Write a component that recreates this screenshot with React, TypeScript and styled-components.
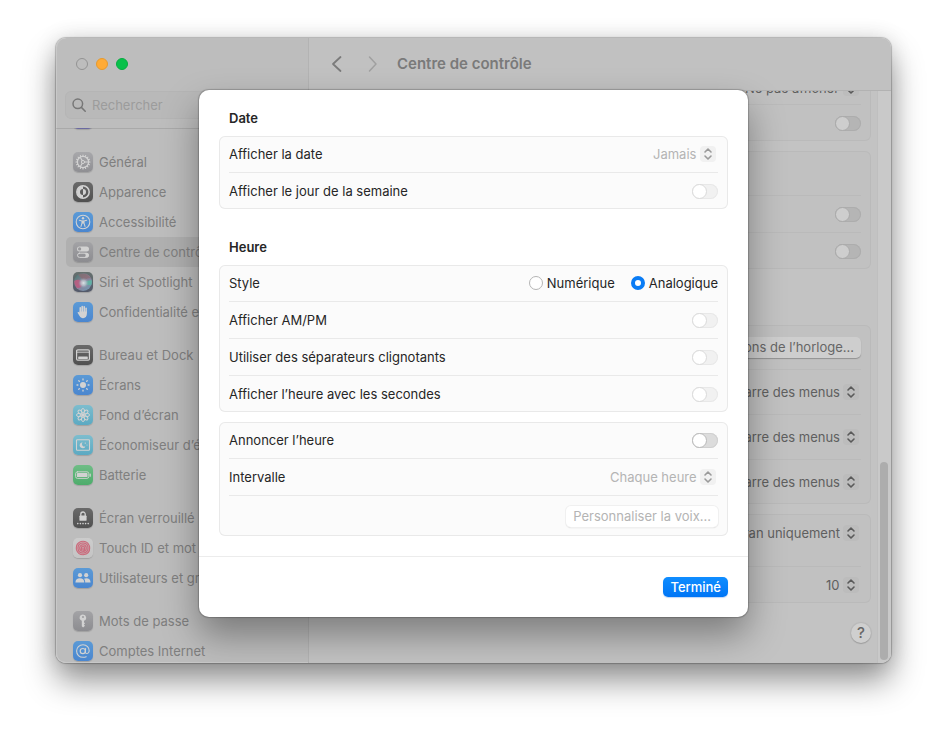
import React from "react";
import styled, { createGlobalStyle, css } from "styled-components";

const GlobalStyle = createGlobalStyle`
  *, *::before, *::after { box-sizing: border-box; }
  body {
    margin: 0;
    background: #fff;
    font-family: Inter, "Liberation Sans", sans-serif;
    font-size: 13px;
    line-height: 16px;
    color: #262626;
  }
  button, input, select { font: inherit; color: inherit; margin: 0; }
  h1, h2 { margin: 0; }
`;

/* ---------- window ---------- */

const Desktop = styled.div`
  display: flex;
  height: 100vh;
  min-height: 640px;
  padding: 38px 56px 74px;
`;

const Window = styled.div`
  position: relative;
  flex: 1;
  min-width: 0;
  display: grid;
  grid-template-columns: 253px minmax(0, 1fr);
  border-radius: 10px;
  box-shadow: 0 0 1px 1px rgba(0, 0, 0, 0.22), 0 18px 32px rgba(0, 0, 0, 0.42),
    0 0 22px rgba(0, 0, 0, 0.12);
`;

const Sidebar = styled.nav`
  display: flex;
  flex-direction: column;
  min-height: 0;
  overflow: hidden;
  background: #bdbdbd;
  border-right: 1px solid #b3b3b3;
  border-radius: 10px 0 0 10px;
  box-shadow: inset 1px 0 0 #c8c8c8, inset 0 -1px 0 #c8c8c8;
`;

const SidebarHeader = styled.header`
  position: relative;
  z-index: 1;
  flex: none;
  display: flex;
  flex-direction: column;
  gap: 21px;
  padding: 20px 9px 9px;
  box-shadow: 0 1px 0 rgba(0, 0, 0, 0.1);
`;

const Lights = styled.div`
  display: flex;
  gap: 8px;
  padding-left: 11px;
`;

const Light = styled.button<{ $fill: string; $edge: string }>`
  width: 12px;
  height: 12px;
  padding: 0;
  border: 1px solid ${(p) => p.$edge};
  border-radius: 50%;
  background: ${(p) => p.$fill};
`;

const Search = styled.label`
  display: flex;
  align-items: center;
  gap: 6px;
  height: 28px;
  padding: 0 6px;
  border: 1px solid #b5b5b5;
  border-radius: 6px;
  background: #b9b9b9;
  color: #777;

  svg { flex: none; }
  input {
    flex: 1;
    min-width: 0;
    padding: 0;
    border: 0;
    outline: 0;
    background: none;
  }
  input::placeholder { color: #9c9c9c; opacity: 1; }
`;

const List = styled.div`
  flex: 1;
  min-height: 0;
  overflow: hidden;
`;

const Groups = styled.div`
  display: flex;
  flex-direction: column;
  gap: 13px;
  margin: -24px 10px 0;
`;

const Group = styled.ul`
  list-style: none;
  margin: 0;
  padding: 0;
`;

const Item = styled.a<{ $selected?: boolean }>`
  display: flex;
  align-items: center;
  gap: 6px;
  height: 30px;
  padding-left: 7px;
  border-radius: 5px;
  color: #7f7f7f;
  text-decoration: none;
  white-space: nowrap;
  overflow: hidden;
  background: ${(p) => (p.$selected ? "#b0b0b0" : "none")};

  svg { flex: none; }
`;

const Tile = styled.span<{ $top: string; $bottom: string }>`
  flex: none;
  display: block;
  width: 20px;
  height: 20px;
  border-radius: 5px;
  background: linear-gradient(${(p) => p.$top}, ${(p) => p.$bottom});
  box-shadow: 0 1px 1px rgba(0, 0, 0, 0.15);
  color: #d2d2d2;

  svg { display: block; }
`;

/* ---------- main pane ---------- */

const Main = styled.main`
  display: flex;
  flex-direction: column;
  min-width: 0;
  min-height: 0;
  overflow: hidden;
  background: #c3c3c3;
  border-radius: 0 10px 10px 0;
`;

const Toolbar = styled.header`
  flex: none;
  display: flex;
  align-items: center;
  height: 53px;
  padding-left: 20px;
  gap: 16px;
  background: #c1c1c1;
  border-bottom: 1px solid #b2b2b2;
`;

const NavButtons = styled.div`
  display: flex;
  gap: 20px;
`;

const NavButton = styled.button<{ $dim?: boolean }>`
  display: flex;
  width: 16px;
  height: 20px;
  padding: 0;
  border: 0;
  background: none;
  color: ${(p) => (p.$dim ? "#a0a0a0" : "#7b7b7b")};
`;

const Title = styled.h1`
  font-size: 15px;
  line-height: 20px;
  font-weight: 600;
  color: #7a7a7a;
`;

const Scroller = styled.div`
  flex: 1;
  min-height: 0;
  display: grid;
  grid-template-columns: minmax(0, 1fr) 14px;
`;

const Pane = styled.div`
  overflow: hidden;
  padding: 0 6px 0 20px;
`;

const PaneContent = styled.div`
  display: flex;
  flex-direction: column;
  gap: 10px;
  margin-top: -19px;
`;

const Gutter = styled.div`
  display: flex;
  flex-direction: column;
  justify-content: flex-end;
  align-items: center;
  padding: 3px 3px 3px 2px;
  background: #c9c9c9;
  border-left: 1px solid #bfbfbf;
`;

const Thumb = styled.div`
  width: 8px;
  height: 35%;
  border-radius: 4px;
  background: #adadad;
`;

const PaneCard = styled.section<{ $spaced?: boolean }>`
  padding: 0 10px;
  border-radius: 6px;
  background: #c1c1c1;
  box-shadow: inset 0 0 0 1px #bababa;
  margin-top: ${(p) => (p.$spaced ? "46px" : "0")};
`;

const HelpRow = styled.div`
  display: flex;
  justify-content: flex-end;
  padding-top: 10px;
`;

const HelpButton = styled.button`
  width: 20px;
  height: 20px;
  padding: 0;
  border: 0;
  border-radius: 50%;
  background: #cfcfcf;
  box-shadow: 0 0 1px 1px rgba(0, 0, 0, 0.06), 0 1px 1px rgba(0, 0, 0, 0.15);
  font-size: 15px;
  font-weight: 500;
  color: #666;
`;

/* ---------- shared controls ---------- */

const Row = styled.div<{ $h?: number; $dark?: boolean; $top?: boolean }>`
  display: flex;
  align-items: ${(p) => (p.$top ? "flex-start" : "center")};
  justify-content: space-between;
  gap: 16px;
  height: ${(p) => p.$h ?? 36}px;
  padding-top: ${(p) => (p.$top ? "11px" : "0")};

  &:not(:first-child) {
    height: ${(p) => (p.$h ?? 36) + 1}px;
    border-top: 1px solid ${(p) => (p.$dark ? "#bababa" : "#e9e9e9")};
  }
`;

const End = styled.div`
  margin-left: auto;
  display: flex;
  align-items: center;
`;

const Switch = styled.input.attrs({ type: "checkbox", role: "switch" })<{
  $tone?: "pane" | "off" | "on";
}>`
  appearance: none;
  flex: none;
  width: 26px;
  height: 15px;
  border-radius: 8px;
  ${(p) => {
    const [track, edge, knob, ring] =
      p.$tone === "pane"
        ? ["#b5b5b5", "#adadad", "#cecece", "#aaaaaa"]
        : p.$tone === "on"
          ? ["#dcdcdc", "#d0d0d0", "#ffffff", "#b9b9b9"]
          : ["#f1f1f1", "#e8e8e8", "#ffffff", "#dadada"];
    return css`
      background: ${track};
      box-shadow: inset 0 0 0 1px ${edge};
      &::before {
        content: "";
        display: block;
        width: 15px;
        height: 15px;
        border: 1px solid ${ring};
        border-radius: 50%;
        background: ${knob};
      }
    `;
  }}
`;

const SelectBox = styled.span<{ $pane?: boolean }>`
  display: inline-grid;
  align-items: center;
  justify-items: end;
  padding-right: 2px;
  color: ${(p) => (p.$pane ? "#5f5f5f" : "#b4b4b4")};

  > * { grid-area: 1 / 1; }
  select {
    appearance: none;
    padding: 0 19px 0 0;
    border: 0;
    outline: 0;
    background: none;
    opacity: 1;
    line-height: 16px;
  }
  svg {
    pointer-events: none;
    border-radius: 4px;
    color: ${(p) => (p.$pane ? "#5a5a5a" : "#9a9a9a")};
    background: ${(p) => (p.$pane ? "#bcbcbc" : "#f1f1f1")};
  }
`;

const Select = ({ value, label, pane, disabled }: { value: string; label: string; pane?: boolean; disabled?: boolean }) => (
  <SelectBox $pane={pane}>
    <select aria-label={label} disabled={disabled}>
      <option>{value}</option>
    </select>
    <svg width="16" height="16" viewBox="0 0 16 16" fill="none" stroke="currentColor" strokeWidth="1.6" strokeLinecap="round" strokeLinejoin="round">
      <path d="M5 6 8 3 11 6M5 10l3 3L11 10" />
    </svg>
  </SelectBox>
);

const PushButton = styled.button<{ $kind: "pane" | "disabled" | "primary" }>`
  height: 21px;
  padding: 0 7px;
  border: 0;
  border-radius: 5px;
  white-space: nowrap;
  ${(p) =>
    p.$kind === "primary"
      ? css`
          height: 20px;
          background: linear-gradient(#0f8dff, #0075f5);
          box-shadow: 0 1px 1px rgba(0, 90, 220, 0.25);
          color: #fff;
          font-weight: 500;
        `
      : p.$kind === "pane"
        ? css`
            background: #cecece;
            box-shadow: 0 1px 1px rgba(0, 0, 0, 0.25);
            color: #666;
          `
        : css`
            background: #fff;
            box-shadow: 0 0 0 1px #f0f0f0, 0 1px 1px rgba(0, 0, 0, 0.25);
            color: #b4b4b4;
          `}
`;

/* ---------- sheet ---------- */

const Overlay = styled.div`
  position: absolute;
  z-index: 2;
  inset: 0;
  display: flex;
  justify-content: center;
  align-items: flex-start;
  padding: 52px 20px 0;
  overflow: hidden;
  border-radius: 10px;
`;

const Sheet = styled.div`
  width: 100%;
  max-width: 549px;
  background: #fff;
  border-radius: 10px;
  box-shadow: 0 0 1px 1px rgba(0, 0, 0, 0.2), 0 18px 36px rgba(0, 0, 0, 0.36);
`;

const SheetBody = styled.div`
  display: flex;
  flex-direction: column;
  gap: 30px;
  padding: 20px;
`;

const Section = styled.section`
  display: flex;
  flex-direction: column;
  gap: 10px;
`;

const Heading = styled.h2`
  padding-left: 10px;
  font-size: 13px;
  line-height: 16px;
  font-weight: 600;
`;

const Card = styled.div`
  padding: 0 10px;
  border-radius: 6px;
  background: #fbfbfb;
  box-shadow: inset 0 0 0 1px #e9e9e9;
`;

const Radios = styled.div`
  display: flex;
  gap: 16px;
`;

const RadioLabel = styled.label`
  display: flex;
  align-items: center;
  gap: 4px;
`;

const Radio = styled.input.attrs({ type: "radio" })`
  appearance: none;
  width: 14px;
  height: 14px;
  border: 1px solid #b5b5b5;
  border-radius: 50%;
  background: #fff;
  &:checked { border: 4px solid #0a7cf5; }
`;

const Footer = styled.footer`
  display: flex;
  justify-content: flex-end;
  padding: 20px;
  border-top: 1px solid #ececec;
`;

/* ---------- sidebar icons ---------- */

const line = { fill: "none", stroke: "currentColor", strokeLinecap: "round", strokeLinejoin: "round" } as const;
const Glyph = ({ children }: { children?: React.ReactNode }) => (
  <svg width="20" height="20" viewBox="0 0 20 20" aria-hidden="true">{children}</svg>
);
const spokes = (n: number) => Array.from({ length: n }, (_, i) => (i * 360) / n);

const GearIcon = (
  <Glyph>
    <circle cx="10" cy="10" r="5.6" {...line} strokeWidth="1.3" />
    {spokes(16).map((a) => (
      <path key={a} d="M10 4.2V3" {...line} strokeWidth="1.1" transform={`rotate(${a} 10 10)`} />
    ))}
    <circle cx="10" cy="10" r="1.6" {...line} strokeWidth="1" />
    <path d="M11.6 10h4M9.2 8.6 7.2 5.2M9.2 11.4l-2 3.4" {...line} strokeWidth="1.1" />
  </Glyph>
);
const AppearanceIcon = (
  <Glyph>
    <circle cx="10" cy="10" r="6.2" {...line} strokeWidth="1.5" />
    <path d="M10 4a6 6 0 0 0 0 12v-3a3 3 0 0 1 0-6z" fill="currentColor" />
    <path d="M10 7a3 3 0 0 1 0 6z" fill="currentColor" />
  </Glyph>
);
const AccessIcon = (
  <Glyph>
    <circle cx="10" cy="10" r="6.8" {...line} strokeWidth="1.1" />
    <circle cx="10" cy="6.3" r="1.2" fill="currentColor" />
    <path d="M6.4 8.3 9 9v2.2L8 14.4M13.6 8.3 11 9v2.2l1 3.2" {...line} strokeWidth="1.1" />
    <path d="M9 8.6h2v3H9z" fill="currentColor" />
  </Glyph>
);
const ControlIcon = (
  <Glyph>
    <rect x="4" y="4.4" width="12" height="5" rx="2.5" fill="currentColor" />
    <circle cx="6.6" cy="6.9" r="1.6" fill="#98989b" />
    <rect x="4.5" y="11.2" width="11" height="4.2" rx="2.1" {...line} strokeWidth="1" />
    <path d="M12.6 11h1a2.3 2.3 0 0 1 0 4.6h-3.2a2.3 2.3 0 0 0 0-4.6z" fill="currentColor" />
  </Glyph>
);
const SiriIcon = (
  <Glyph>
    <defs>
      <radialGradient id="siriCore">
        <stop offset="0" stopColor="#dde3e6" />
        <stop offset="0.5" stopColor="#b4c0ca" stopOpacity="0.8" />
        <stop offset="1" stopColor="#8494aa" stopOpacity="0" />
      </radialGradient>
      <linearGradient id="siriBall" x1="0" y1="0" x2="1" y2="1">
        <stop offset="0" stopColor="#3f7a6e" />
        <stop offset="0.5" stopColor="#8d8098" />
        <stop offset="1" stopColor="#6a9fb8" />
      </linearGradient>
    </defs>
    <circle cx="10" cy="10" r="9" fill="url(#siriBall)" />
    <path d="M1.200 9C5 6.500 8 8 10.500 10.500c-1 4-4 6.500-7 5A9 9 0 0 1 1.200 9z" fill="#c05a80" opacity="0.85" />
    <path d="M5 2.800C9 .4 15.500 1.500 18 6.500c-3-1-6 0-7.500 4C9.500 7 7.500 5 5 2.800z" fill="#8c6a70" opacity="0.7" />
    <path d="M18.800 8.500c-1-.5-4.700 0-8.300 2 2 2.300 5 3.300 8 2z" fill="#5ab8a2" opacity="0.85" />
    <circle cx="10.500" cy="11" r="5.500" fill="url(#siriCore)" />
  </Glyph>
);
const HandIcon = (
  <Glyph>
    <path d="M7.300 10.500V5.700M9.200 9.800V4.500M11.200 9.800V4.700M13.100 10.500V6.200" {...line} strokeWidth="1.600" />
    <path d="M6.500 9.500h7.400v2.300c0 2.700-1.500 4.400-3.800 4.400-1.700 0-2.700-.8-3.500-2.200L4.700 11c-.4-.8.7-1.400 1.300-.7l.5.700z" fill="currentColor" />
  </Glyph>
);
const DockIcon = (
  <Glyph>
    <rect x="3.600" y="4.800" width="12.800" height="10.400" rx="1.200" {...line} strokeWidth="1.200" />
    <path d="M4 7.200h12" {...line} strokeWidth="0.900" />
    <rect x="5.200" y="11.400" width="9.600" height="2.600" rx="0.600" fill="currentColor" />
  </Glyph>
);
const SunIcon = (
  <Glyph>
    <circle cx="10" cy="10" r="3" fill="currentColor" />
    {spokes(8).map((a) => (
      <path key={a} d="M10 4.900V4" {...line} strokeWidth="1.300" transform={`rotate(${a} 10 10)`} />
    ))}
  </Glyph>
);
const FlowerIcon = (
  <Glyph>
    {spokes(8).map((a) => (
      <ellipse key={a} cx="10" cy="5.800" rx="1.600" ry="2.300" {...line} strokeWidth="1" transform={`rotate(${a} 10 10)`} />
    ))}
    <circle cx="10" cy="10" r="1.700" fill="currentColor" />
  </Glyph>
);
const SaverIcon = (
  <Glyph>
    <rect x="3.500" y="4.800" width="13" height="10.400" rx="0.800" {...line} strokeWidth="1.100" />
    <path d="M9.600 7.200a3 3 0 1 0 2.800 4.200 2.600 2.600 0 0 1-2.800-4.200z" fill="currentColor" />
    <circle cx="12.300" cy="8.100" r="0.700" fill="currentColor" />
    <circle cx="14" cy="10" r="0.500" fill="currentColor" />
  </Glyph>
);
const BatteryIcon = (
  <Glyph>
    <rect x="2.600" y="6.800" width="13.200" height="6.600" rx="1.900" {...line} strokeWidth="0.900" />
    <rect x="3.900" y="8.100" width="10.600" height="4" rx="0.900" fill="currentColor" />
    <path d="M17.200 9v2.200" {...line} strokeWidth="1.200" />
  </Glyph>
);
const LockIcon = (
  <Glyph>
    <path d="M7.800 8V6.200a2.200 2.200 0 0 1 4.400 0V8" {...line} strokeWidth="1.300" />
    <rect x="6.400" y="7.400" width="7.200" height="5.400" rx="0.900" fill="currentColor" />
    {[4.8, 7.4, 10, 12.6, 15.2].map((x) => (
      <circle key={x} cx={x} cy="15.600" r="0.800" fill="currentColor" />
    ))}
  </Glyph>
);
const TouchIcon = (
  <Glyph>
    <circle cx="10" cy="10" r="7" fill="#cb6b7c" opacity="0.35" />
    <g fill="none" stroke="#cb6b7c" strokeWidth="1.100" strokeLinecap="round">
      <circle cx="10" cy="10" r="6.700" strokeDasharray="9 .8" />
      <circle cx="10" cy="10" r="5" strokeDasharray="7 .8" />
      <circle cx="10" cy="10" r="3.300" strokeDasharray="5 .8" />
      <path d="M8.400 11.500v-1.600a1.600 1.600 0 0 1 3.200 0c0 1.600-.3 2.600-.8 3.600M10 10v2" />
    </g>
  </Glyph>
);
const UsersIcon = (
  <Glyph>
    <circle cx="7" cy="7.200" r="2.100" fill="currentColor" />
    <circle cx="13.200" cy="7.200" r="2.100" fill="currentColor" />
    <path d="M2.400 14.400c0-2.600 1.800-4.200 4.500-4.200s4.400 1.600 4.400 4.200z" fill="currentColor" />
    <path d="M12.200 14.400c0-1.600-.4-2.800-1.200-3.700.6-.3 1.400-.5 2.300-.5 2.600 0 4.300 1.600 4.300 4.200z" fill="currentColor" />
  </Glyph>
);
const KeyIcon = (
  <Glyph>
    <path fillRule="evenodd" d="M10 3.400a3.300 3.300 0 0 0-1.200 6.400v5.400l1.300 1.400 1.900-1.900-1.100-1.100 1.100-1.200-1-1.100V9.800A3.300 3.300 0 0 0 10 3.400zm0 1.500a1 1 0 1 1 0 2 1 1 0 0 1 0-2z" fill="currentColor" />
  </Glyph>
);
const AtIcon = (
  <Glyph>
    <circle cx="9.800" cy="10.100" r="2.600" {...line} strokeWidth="1.200" />
    <path d="M12.600 7.500l-.3 3.600c-.1 1.800 3.600 2.200 3.900-1.100.2-3.600-2.500-6.200-6.200-6.200-3.700 0-6.400 2.700-6.400 6.300 0 3.700 2.700 6.200 6.500 6.200 1.200 0 2.200-.2 3.100-.6" {...line} strokeWidth="1.100" />
  </Glyph>
);

type Entry = {
  label: string;
  icon: React.ReactNode;
  top: string;
  bottom: string;
  selected?: boolean;
  iconOnly?: boolean;
};

const menu: Entry[][] = [
  [{ label: "Temps d’écran", icon: <Glyph />, top: "#6e6cb8", bottom: "#7876b4", iconOnly: true }],
  [
    { label: "Général", icon: GearIcon, top: "#a8a8ab", bottom: "#8f8f93" },
    { label: "Apparence", icon: AppearanceIcon, top: "#6a6a6a", bottom: "#505050" },
    { label: "Accessibilité", icon: AccessIcon, top: "#5b9ad6", bottom: "#4a86cf" },
    { label: "Centre de contrôle", icon: ControlIcon, top: "#a3a3a6", bottom: "#8c8c90", selected: true },
    { label: "Siri et Spotlight", icon: SiriIcon, top: "#66706e", bottom: "#53596a" },
    { label: "Confidentialité et sécurité", icon: HandIcon, top: "#5b9ad6", bottom: "#4a86cf" },
  ],
  [
    { label: "Bureau et Dock", icon: DockIcon, top: "#6a6a6a", bottom: "#505050" },
    { label: "Écrans", icon: SunIcon, top: "#5b9ad6", bottom: "#4a86cf" },
    { label: "Fond d’écran", icon: FlowerIcon, top: "#7dbdce", bottom: "#5ba9c2" },
    { label: "Économiseur d’écran", icon: SaverIcon, top: "#7dbdce", bottom: "#5ba9c2" },
    { label: "Batterie", icon: BatteryIcon, top: "#6fbd86", bottom: "#4dac6b" },
  ],
  [
    { label: "Écran verrouillé", icon: LockIcon, top: "#6a6a6a", bottom: "#505050" },
    { label: "Touch ID et mot de passe", icon: TouchIcon, top: "#cccccc", bottom: "#c4c4c4" },
    { label: "Utilisateurs et groupes", icon: UsersIcon, top: "#5b9ad6", bottom: "#4a86cf" },
  ],
  [
    { label: "Mots de passe", icon: KeyIcon, top: "#a3a3a6", bottom: "#8c8c90" },
    { label: "Comptes Internet", icon: AtIcon, top: "#5b9ad6", bottom: "#4a86cf" },
  ],
];

export default function App() {
  return (
    <>
      <GlobalStyle />
      <Desktop>
        <Window>
          <Sidebar>
            <SidebarHeader>
              <Lights>
                <Light aria-label="Fermer" $fill="#bdbdbd" $edge="#939393" />
                <Light aria-label="Réduire" $fill="#ffab36" $edge="#e89a2c" />
                <Light aria-label="Agrandir" $fill="#08c14a" $edge="#06ac41" />
              </Lights>
              <Search>
                <svg width="14" height="14" viewBox="0 0 14 14" {...line} strokeWidth="1.500">
                  <circle cx="5.800" cy="5.800" r="4.800" />
                  <path d="m9.400 9.400 3.800 3.800" />
                </svg>
                <input type="search" placeholder="Rechercher" aria-label="Rechercher" />
              </Search>
            </SidebarHeader>
            <List>
              <Groups>
                {menu.map((group) => (
                  <Group key={group[0].label}>
                    {group.map((item) => (
                      <li key={item.label}>
                        <Item href="#" $selected={item.selected} aria-label={item.label}>
                          <Tile $top={item.top} $bottom={item.bottom}>{item.icon}</Tile>
                          {item.iconOnly ? null : item.label}
                        </Item>
                      </li>
                    ))}
                  </Group>
                ))}
              </Groups>
            </List>
          </Sidebar>

          <Main>
            <Toolbar>
              <NavButtons>
                <NavButton aria-label="Précédent">
                  <svg width="16" height="20" viewBox="0 0 16 20" {...line} strokeWidth="1.800">
                    <path d="M11.500 3 4 10l7.500 7" />
                  </svg>
                </NavButton>
                <NavButton aria-label="Suivant" $dim>
                  <svg width="16" height="20" viewBox="0 0 16 20" {...line} strokeWidth="1.500">
                    <path d="m4.500 3 6.500 7-6.500 7" />
                  </svg>
                </NavButton>
              </NavButtons>
              <Title>Centre de contrôle</Title>
            </Toolbar>
            <Scroller>
              <Pane>
                <PaneContent>
                  <PaneCard>
                    <Row $dark $h={32}><End><Select pane label="Affichage" value="Ne pas afficher" /></End></Row>
                    <Row $dark><End><Switch $tone="pane" aria-label="Option" /></End></Row>
                  </PaneCard>
                  <PaneCard>
                    <Row $dark $h={44} />
                    <Row $dark><End><Switch $tone="pane" aria-label="Option" /></End></Row>
                    <Row $dark><End><Switch $tone="pane" aria-label="Option" /></End></Row>
                  </PaneCard>
                  <PaneCard $spaced>
                    <Row $dark $h={44}><End><PushButton $kind="pane">Options de l’horloge...</PushButton></End></Row>
                    <Row $dark $h={44}><End><Select pane label="Spotlight" value="Ne pas afficher dans la barre des menus" /></End></Row>
                    <Row $dark $h={44}><End><Select pane label="Siri" value="Ne pas afficher dans la barre des menus" /></End></Row>
                    <Row $dark $h={44}><End><Select pane label="Time Machine" value="Ne pas afficher dans la barre des menus" /></End></Row>
                  </PaneCard>
                  <PaneCard>
                    <Row $dark $h={52} $top><End><Select pane label="Barre des menus" value="En mode plein écran uniquement" /></End></Row>
                    <Row $dark><End><Select pane label="Éléments récents" value="10" /></End></Row>
                  </PaneCard>
                  <HelpRow><HelpButton aria-label="Aide">?</HelpButton></HelpRow>
                </PaneContent>
              </Pane>
              <Gutter><Thumb /></Gutter>
            </Scroller>
          </Main>

          <Overlay>
            <Sheet role="dialog" aria-label="Options de l’horloge">
              <SheetBody>
                <Section>
                  <Heading>Date</Heading>
                  <Card>
                    <Row>Afficher la date<Select disabled label="Afficher la date" value="Jamais" /></Row>
                    <Row><label htmlFor="weekday">Afficher le jour de la semaine</label><Switch id="weekday" disabled /></Row>
                  </Card>
                </Section>
                <Section>
                  <Heading>Heure</Heading>
                  <Card>
                    <Row>
                      Style
                      <Radios role="radiogroup" aria-label="Style">
                        <RadioLabel><Radio name="style" />Numérique</RadioLabel>
                        <RadioLabel><Radio name="style" defaultChecked />Analogique</RadioLabel>
                      </Radios>
                    </Row>
                    <Row><label htmlFor="ampm">Afficher AM/PM</label><Switch id="ampm" disabled /></Row>
                    <Row><label htmlFor="blink">Utiliser des séparateurs clignotants</label><Switch id="blink" disabled /></Row>
                    <Row><label htmlFor="seconds">Afficher l’heure avec les secondes</label><Switch id="seconds" disabled /></Row>
                  </Card>
                  <Card>
                    <Row><label htmlFor="announce">Annoncer l’heure</label><Switch id="announce" $tone="on" /></Row>
                    <Row>Intervalle<Select disabled label="Intervalle" value="Chaque heure" /></Row>
                    <Row $h={40}><End><PushButton $kind="disabled" disabled>Personnaliser la voix...</PushButton></End></Row>
                  </Card>
                </Section>
              </SheetBody>
              <Footer><PushButton $kind="primary">Terminé</PushButton></Footer>
            </Sheet>
          </Overlay>
        </Window>
      </Desktop>
    </>
  );
}
